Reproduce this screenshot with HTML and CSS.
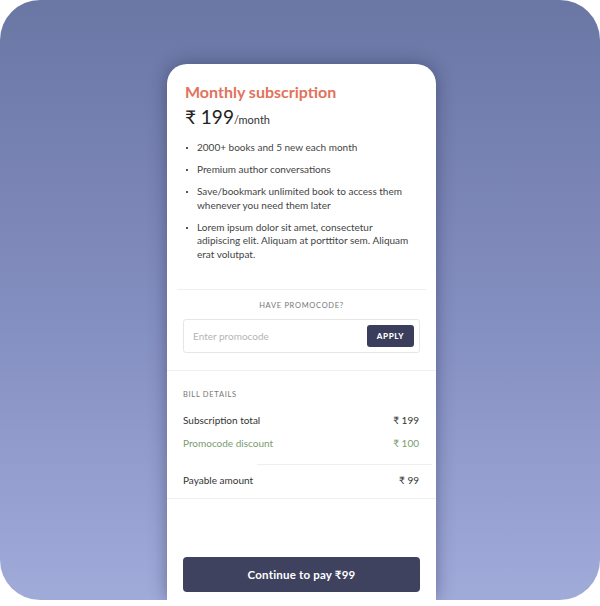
FILE: index.html
```
<!DOCTYPE html>
<html lang="en">
<head>
    <meta charset="UTF-8">
    <meta name="viewport" content="width=device-width, initial-scale=1.0">
    <title>Monthly subscription</title>
    <link rel="stylesheet" href="styles.css">
</head>
<body>
    <div id="frame">
        <div id="card">
            <div class="plan">
                <div class="plan-title">Monthly subscription</div>
                <div class="plan-price">₹ 199<span>/month</span></div>
                <ul class="plan-list">
                    <li>2000+ books and 5 new each month</li>
                    <li>Premium author conversations</li>
                    <li>Save/bookmark unlimited book to access them whenever you need them later</li>
                    <li>Lorem ipsum dolor sit amet, consectetur adipiscing elit. Aliquam at porttitor sem. Aliquam erat volutpat.</li>
                </ul>
            </div>

            <div class="promo">
                <div class="small-label center">HAVE PROMOCODE?</div>
                <div class="promo-box">
                    <input class="promo-input" type="text" placeholder="Enter promocode">
                    <button class="apply-btn">APPLY</button>
                </div>
            </div>

            <div class="bill">
                <div class="small-label">BILL DETAILS</div>
                <div class="bill-row">
                    <span>Subscription total</span>
                    <span>₹ 199</span>
                </div>
                <div class="bill-row discount">
                    <span>Promocode discount</span>
                    <span>₹ 100</span>
                </div>
                <div class="bill-line"></div>
                <div class="bill-row total">
                    <span>Payable amount</span>
                    <span>₹ 99</span>
                </div>
            </div>

            <div class="spacer"></div>

            <div class="pay">
                <button class="pay-btn">Continue to pay ₹99</button>
            </div>
        </div>
    </div>
</body>
</html>
```
FILE: styles.css
```
body {
    margin: 0;
    background-color: #FFFFFF;
    font-family: Lato, "Open Sans", sans-serif;
}

#frame {
    width: 600px;
    height: 600px;
    border-radius: 40px;
    overflow: hidden;
    background: linear-gradient(180deg, #6a76a4 0%, #8590c2 55%, #a1abda 100%);
    display: flex;
    padding-top: 64px;
    box-sizing: border-box;
}

#card {
    width: 269px;
    margin-left: 167px;
    background-color: #FFFFFF;
    border-radius: 20px 20px 0 0;
    display: flex;
    flex-direction: column;
    box-shadow: 0 0 18px rgba(30, 35, 70, 0.45);
}

.plan {
    margin: 0 10px;
    padding: 18px 8px 19px;
    border-bottom: 1px solid #efefef;
}

.plan-title {
    color: #e2725b;
    font-size: 16px;
    font-weight: 700;
    line-height: 20px;
}

.plan-price {
    margin-top: 3px;
    font-size: 19px;
    line-height: 24px;
    color: #222;
}

.plan-price span {
    font-size: 11px;
    color: #333;
}

.plan-list {
    list-style: none;
    margin: 9px 0 0;
    padding: 0;
}

.plan-list li {
    position: relative;
    padding-left: 12px;
    font-size: 10px;
    line-height: 13.5px;
    color: #444;
    margin-bottom: 8.5px;
}

.plan-list li:before {
    content: "";
    position: absolute; /* bullet dot */
    left: 1px;
    top: 6px;
    width: 2px;
    height: 2px;
    background-color: #555;
}

.promo {
    padding: 11px 16px 17px 16px;
    border-bottom: 1px solid #efefef;
}

.small-label {
    font-size: 7.5px;
    letter-spacing: 0.7px;
    color: #777;
}

.center {
    text-align: center;
}

.promo-box {
    display: flex;
    align-items: center;
    margin-top: 9px;
    height: 34px;
    border: 1px solid #e6e6e6;
    border-radius: 3px;
    padding: 0 5px 0 9px;
    box-sizing: border-box;
    width: 237px;
}

.promo-input {
    flex: 1;
    border: none;
    outline: none;
    font-family: inherit;
    font-size: 10px;
    color: #333;
    padding: 0;
    min-width: 0;
}

.promo-input::placeholder {
    color: #b5b5b5;
}

.apply-btn {
    width: 47px;
    height: 22px;
    border: none;
    border-radius: 3px;
    background-color: #3a3e5c;
    color: #FFFFFF;
    font-family: inherit;
    font-size: 8px;
    font-weight: 900;
    letter-spacing: 0.6px;
    padding: 0;
}

.bill {
    padding: 19px 17px 0 16px;
    border-bottom: 1px solid #efefef;
}

.bill-row {
    display: flex;
    justify-content: space-between;
    font-size: 10px;
    color: #333;
    line-height: 13px;
}

.bill .small-label {
    margin-bottom: 15px;
}

.bill-row.discount {
    color: #7b9b70;
    margin-top: 10px;
    margin-bottom: 14px;
}

.bill-line {
    height: 1px;
    background-color: #efefef;
    margin: 0 -13px 9px 74px;
}

.bill-row.total {
    margin-bottom: 11px;
}

.spacer {
    flex: 1;
}

.pay {
    padding: 0 16px 8px;
}

.pay-btn {
    width: 237px;
    height: 35px;
    border: none;
    border-radius: 4px;
    background-color: #3e425f;
    color: #FFFFFF;
    font-family: inherit;
    font-size: 11.5px;
    font-weight: 700;
    letter-spacing: 0.2px;
}
```
